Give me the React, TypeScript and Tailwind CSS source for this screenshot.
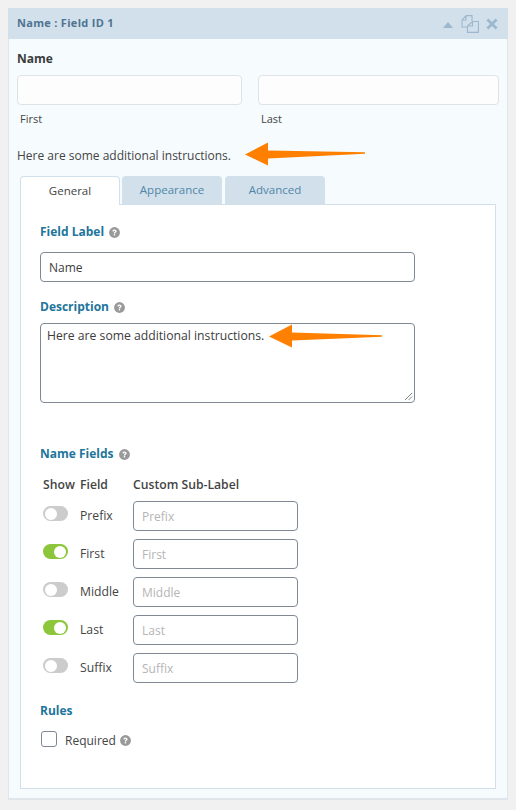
import React from "react";

function Help({ className = "" }: { className?: string }) {
  return (
    <svg viewBox="0 0 12 12" className={`inline-block w-[11px] h-[11px] ${className}`}>
      <circle cx="6" cy="6" r="5.9" fill="#999999" />
      <path d="M3.7 4.7c0-1.4 1.1-2.1 2.3-2.1s2.3.8 2.3 1.9c0 1.6-1.6 1.5-1.6 2.6H5.2c0-1.8 1.5-1.7 1.5-2.5 0-.4-.3-.6-.7-.6-.5 0-.8.3-.8.8z" fill="#fff" />
      <rect x="5.2" y="7.7" width="1.5" height="1.5" fill="#fff" />
    </svg>
  );
}

function Arrow({ width, tail, className }: { width: number; tail: number; className: string }) {
  return (
    <svg viewBox={`0 0 ${width} 24`} className={`absolute h-[24px] ${className}`}>
      <path d={`M0 12.5 L23 0.5 L23 8.5 L${width} ${tail - 0.7} L${width} ${tail + 0.7} L23 16.5 L23 23.5 Z`} fill="#ff7f00" />
    </svg>
  );
}

function Toggle({ on }: { on?: boolean }) {
  return (
    <div className={`w-[25px] h-[15px] rounded-full flex items-center px-[2px] ${on ? "bg-[#8cc63a] justify-end" : "bg-[#cccccc] justify-start"}`}>
      <div className="w-[12px] h-[12px] rounded-full bg-white" />
    </div>
  );
}

const rows = [
  { name: "Prefix", on: false },
  { name: "First", on: true },
  { name: "Middle", on: false },
  { name: "Last", on: true },
  { name: "Suffix", on: false },
];

const heading = "text-[12px] leading-[18px] pt-[1px] -mb-[1px] font-bold text-[#21759b] flex items-center gap-[5px]";

export default function App() {
  return (
    <div className="w-[516px] h-[810px] bg-[#f1f1f1] pt-[8px] pl-[8px] text-[#3c434a] text-[12px] font-['Open_Sans',sans-serif] overflow-hidden">
      <div className="relative w-[500px] h-[792px] bg-[#f6fbfe] border-x border-b-2 border-[#dfe5eb] flex flex-col">
        <div className="h-[31px] bg-[#d2e0eb] flex items-center justify-between pl-[9px] pr-[10px] -mx-px">
          <span className="text-[11px] font-bold text-[#4f7391] tracking-[0.3px]">Name : Field ID 1</span>
          <div className="flex items-center">
            <svg viewBox="0 0 10 6" className="w-[10px] h-[6px] mt-[2px]"><path d="M5 0 L10 6 L0 6 Z" fill="#9db8cd" /></svg>
            <svg viewBox="0 0 18 18" className="w-[18px] h-[18px] ml-[8px]" fill="none" stroke="#9db8cd" strokeWidth="1.1">
              <path d="M5 0.6H11V6M5 0.6L1 5V12H6.5M5 0.6V5H1" />
              <path d="M11.5 6.5H17.4V17.4H6.5V11ZM11.5 6.5V11H6.5" />
            </svg>
            <svg viewBox="0 0 12 12" className="w-[12px] h-[12px] ml-[7px]"><path d="M2.4 0.5 L6 4 L9.6 0.5 L11.6 2.5 L8 6 L11.6 9.5 L9.6 11.5 L6 8 L2.4 11.5 L0.4 9.5 L4 6 L0.4 2.5 Z" fill="#9db8cd" /></svg>
          </div>
        </div>

        <div className="pl-[8px] pr-[8px] pt-[11px]">
          <div className="text-[12px] leading-[18px] font-bold text-[#3c3c3c]">Name</div>
          <div className="mt-[7px] flex gap-[16px]">
            <div className="w-[225px]">
              <div className="h-[30px] bg-[#fdfdfd] border border-[#dfe3e8] rounded-[4px]" />
              <div className="mt-[6px] pl-[3px] text-[11px] leading-[16px] text-[#444]">First</div>
            </div>
            <div className="w-[241px]">
              <div className="h-[30px] bg-[#fdfdfd] border border-[#dfe3e8] rounded-[4px]" />
              <div className="mt-[6px] pl-[3px] text-[11px] leading-[16px] text-[#444]">Last</div>
            </div>
          </div>
          <div className="mt-[20px] text-[12px] leading-[18px] text-[#444]">Here are some additional instructions.</div>
        </div>

        <div className="mx-[11px] mt-[11px] flex-1 mb-[9px] flex flex-col">
          <div className="flex h-[28px] text-[11.5px]">
            <div className="relative z-10 w-[100px] h-[29px] pb-[1px] bg-white border border-b-0 border-[#d2e0eb] rounded-t-[4px] flex items-center justify-center text-[#444]">General</div>
            <div className="ml-[2px] w-[100px] bg-[#d2e0eb] rounded-t-[4px] flex items-center justify-center text-[#4f86a8]">Appearance</div>
            <div className="ml-[3px] w-[100px] bg-[#d2e0eb] rounded-t-[4px] flex items-center justify-center text-[#4f86a8]">Advanced</div>
          </div>
          <div className="flex-1 bg-white border border-[#d2e0eb] pl-[19px] pt-[17px]">
            <div className={heading}>Field Label <Help /></div>
            <div className="mt-[12px] w-[375px] h-[30px] border border-[#7e8993] rounded-[4px] pl-[8px] pt-[1px] flex items-center text-[#3c3c3c]">Name</div>
            <div className={`${heading} mt-[15px]`}>Description <Help /></div>
            <div className="relative mt-[8px] w-[375px] h-[80px] border border-[#7e8993] rounded-[4px] pl-[6px] pt-[3px] text-[12.2px] leading-[18px] text-[#3c3c3c]">
              Here are some additional instructions.
              <svg viewBox="0 0 10 10" className="absolute right-[1px] bottom-[1px] w-[9px] h-[9px]" stroke="#666" strokeWidth="0.9">
                <path d="M1 9 L9 1 M5 9 L9 5" />
              </svg>
            </div>
            <div className={`${heading} mt-[41px]`}>Name Fields <Help /></div>
            <div className="mt-[14px] flex text-[12.2px] leading-[18px] font-semibold text-[#444]">
              <span className="ml-[3px] w-[37px]">Show</span>
              <span className="w-[53px]">Field</span>
              <span>Custom Sub-Label</span>
            </div>
            <div className="mt-[7px] flex flex-col gap-[8px]">
              {rows.map((r) => (
                <div key={r.name} className="flex items-center h-[30px]">
                  <div className="ml-[3px] w-[37px] -mt-[5px]"><Toggle on={r.on} /></div>
                  <div className="w-[53px] text-[12.2px] text-[#444]">{r.name}</div>
                  <div className="w-[165px] h-[30px] border border-[#7e8993] rounded-[4px] pl-[8px] pt-[2px] flex items-center text-[#b5b5b5]">{r.name}</div>
                </div>
              ))}
            </div>
            <div className={`${heading} mt-[18px]`}>Rules</div>
            <div className="mt-[12px] ml-px flex items-center h-[16px]">
              <div className="w-[16px] h-[16px] border border-[#7e8993] rounded-[3px] bg-white" />
              <span className="ml-[8px] mt-[4px] text-[12px] text-[#444]">Required</span>
              <Help className="ml-[4px] mt-[3px]" />
            </div>
          </div>
        </div>

        <Arrow width={120} tail={11} className="w-[120px] left-[236px] top-[134px]" />
        <Arrow width={113} tail={12} className="w-[113px] left-[260px] top-[316px]" />
      </div>
    </div>
  );
}
